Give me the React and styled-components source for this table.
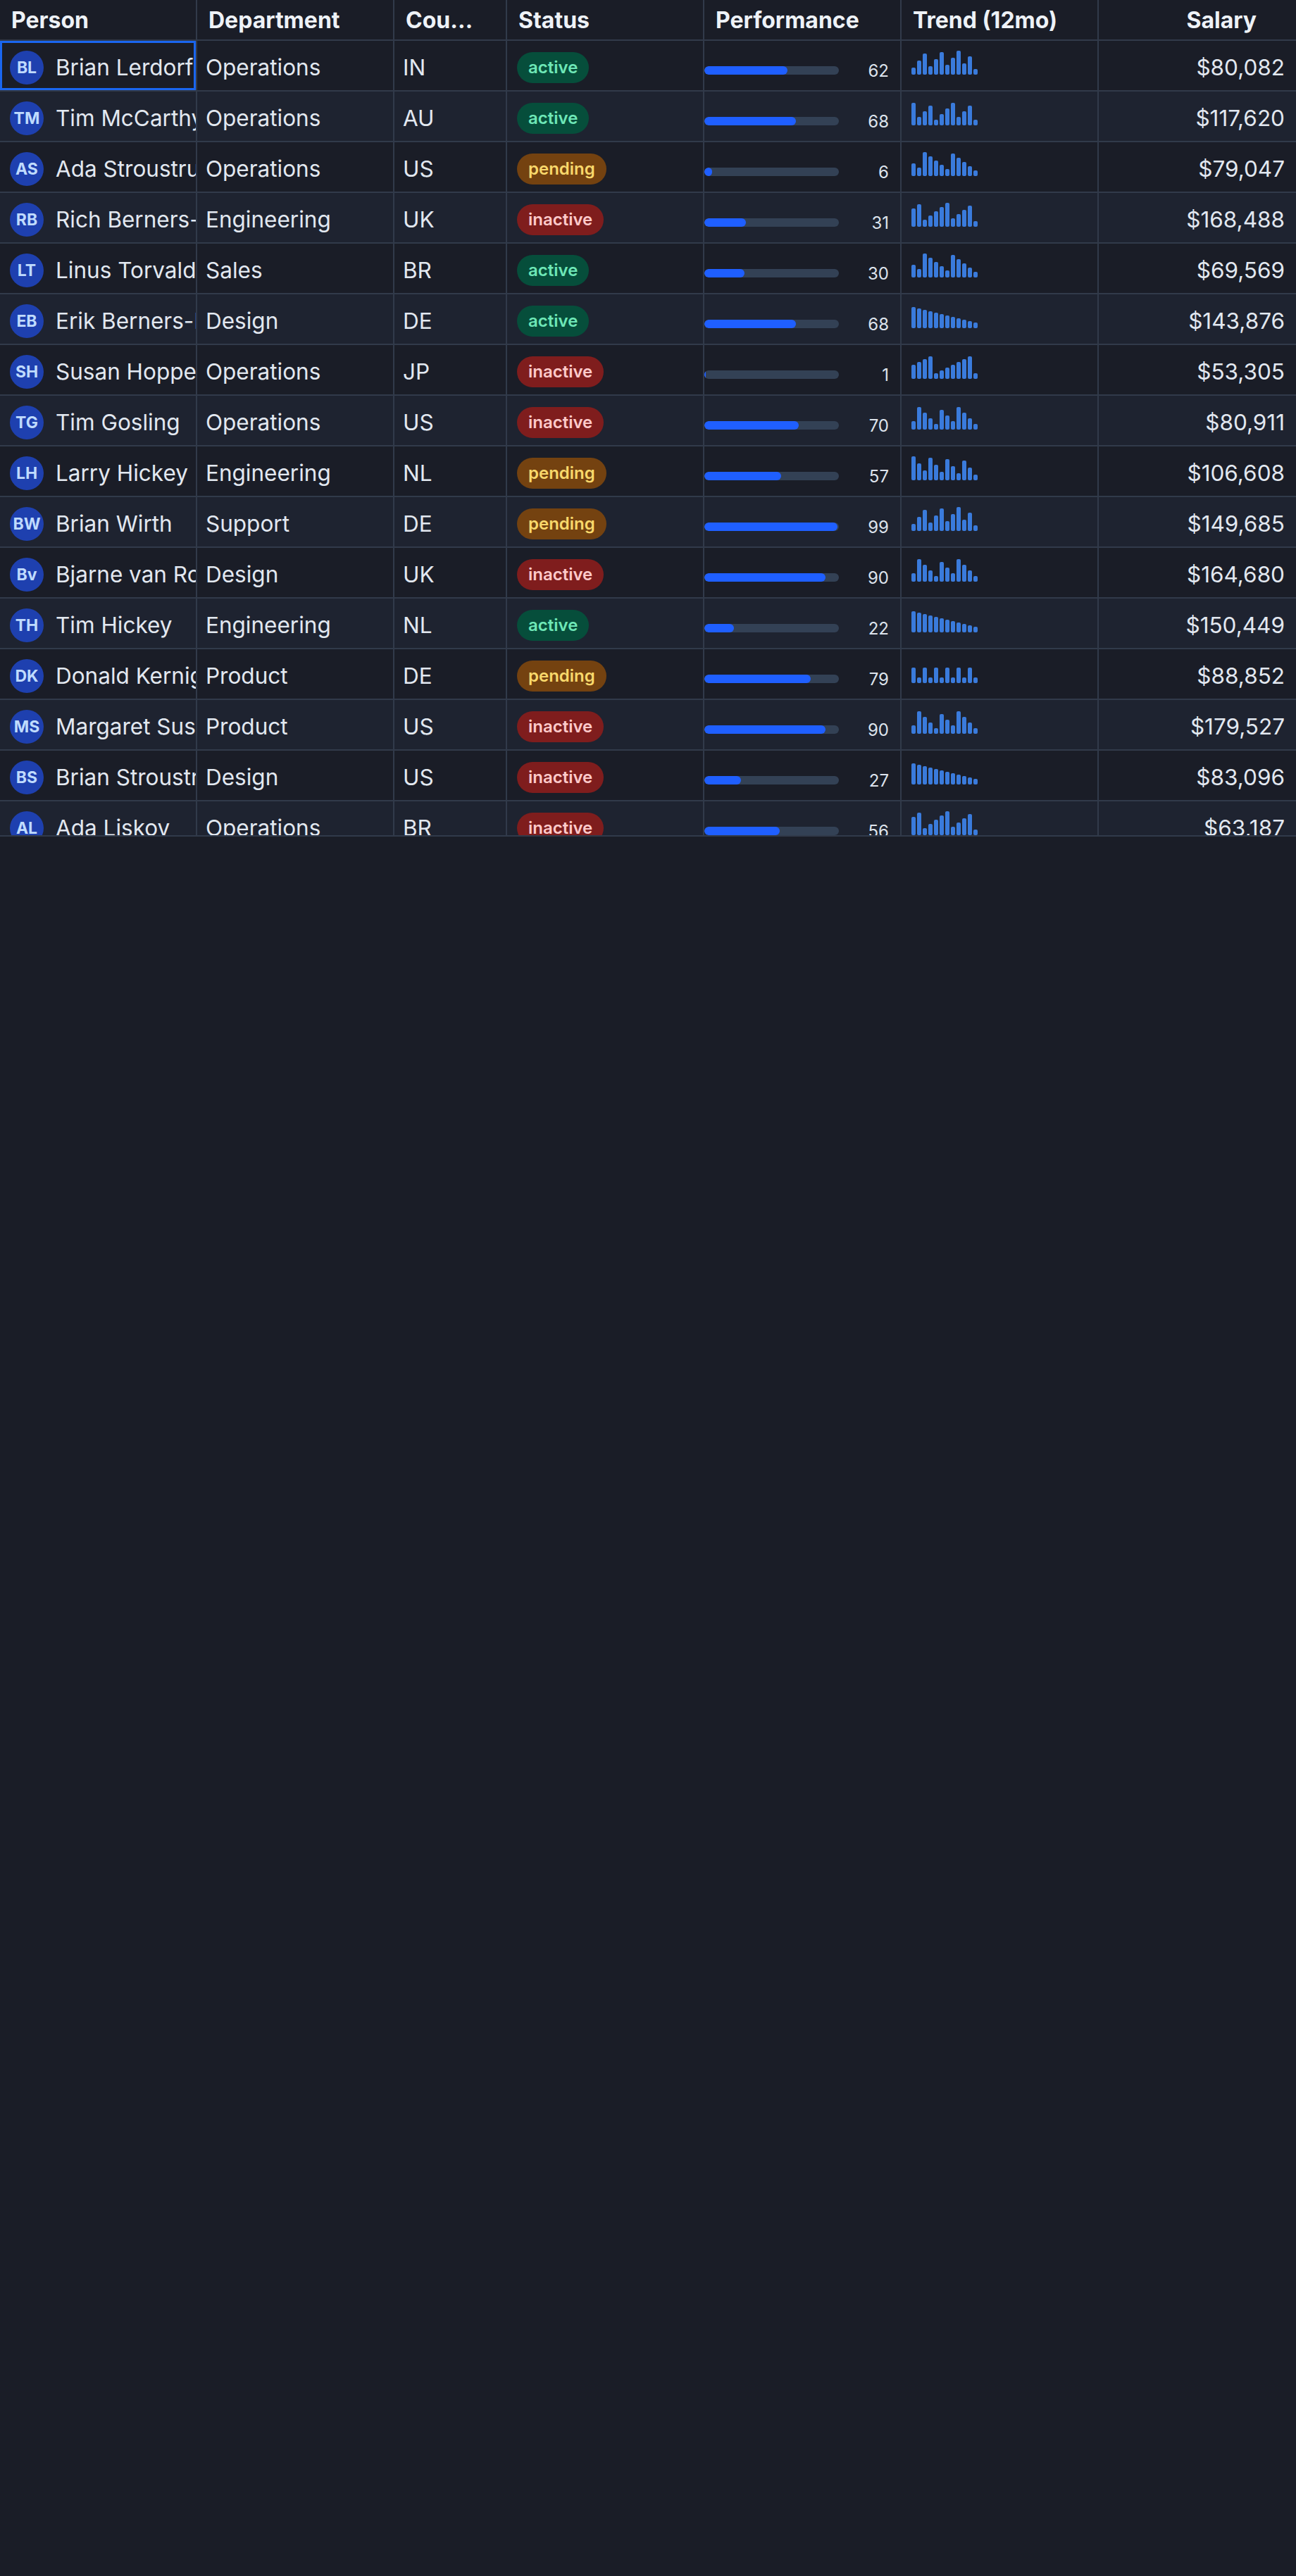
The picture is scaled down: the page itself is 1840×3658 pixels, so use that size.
import styled, { createGlobalStyle } from "styled-components";

const LINE = "#313a4a";
const COLS = "280px 280px 160px 280px 280px 280px 280px";

const GlobalStyle = createGlobalStyle`
  html, body {
    margin: 0;
    background: #1a1d27;
  }
  body {
    font-family: Inter, "Noto Sans", sans-serif;
    color: #e2e8f0;
  }
`;

const Page = styled.div`
  min-height: 3658px;
  background: #1a1d27;
`;

const Grid = styled.div`
  width: 1840px;
  height: 1188px;
  box-sizing: border-box;
  overflow: hidden;
  border-bottom: 2px solid ${LINE};
`;

const HeaderRow = styled.div`
  display: grid;
  grid-template-columns: ${COLS};
  height: 58px;
  box-sizing: border-box;
  border-bottom: 2px solid ${LINE};
  background: #1a1d27;
`;

const HeadCell = styled.div`
  display: flex;
  align-items: center;
  justify-content: ${(p) => (p.$right ? "flex-end" : "flex-start")};
  min-width: 0;
  padding: 0 ${(p) => (p.$right ? "56px" : "46px")} 0 16px;
  border-right: ${(p) => (p.$last ? "none" : `2px solid ${LINE}`)};
  font-size: 32px;
  font-weight: 700;
  color: #eef2f7;
`;

const HeadLabel = styled.span`
  overflow: hidden;
  white-space: nowrap;
  text-overflow: ellipsis;
`;

const Row = styled.div`
  display: grid;
  grid-template-columns: ${COLS};
  height: 72px;
  box-sizing: border-box;
  border-bottom: 2px solid ${LINE};
  background: ${(p) => (p.$alt ? "#1e2330" : "#1a1d27")};
`;

const Cell = styled.div`
  display: flex;
  align-items: center;
  min-width: 0;
  overflow: hidden;
  white-space: nowrap;
  box-sizing: border-box;
  padding: 5px 12px 0;
  border-right: 2px solid ${LINE};
  font-size: 31.5px;
  color: #e2e8f0;
`;

const NameCell = styled(Cell)`
  position: relative;
  gap: 17px;
  padding-left: 14px;
  padding-right: 0;

  &::after {
    content: "";
    display: ${(p) => (p.$focused ? "block" : "none")};
    position: absolute;
    inset: 0;
    border: 3px solid #1a66f0;
    pointer-events: none;
  }
`;

const Avatar = styled.div`
  width: 48px;
  height: 48px;
  flex-shrink: 0;
  border-radius: 50%;
  background: #1e40af;
  color: #bfdbfe;
  font-size: 23px;
  font-weight: 700;
  display: flex;
  align-items: center;
  justify-content: center;
`;

const TextCell = styled(Cell)``;

const StatusCell = styled(Cell)`
  padding-left: 14px;
`;

const BADGE = {
  active: { bg: "#064e3b", fg: "#6ee7b7" },
  pending: { bg: "#744210", fg: "#f9d86b" },
  inactive: { bg: "#7f1d1d", fg: "#fecaca" },
};

const Badge = styled.span`
  display: inline-flex;
  align-items: center;
  height: 44px;
  padding: 0 16px;
  border-radius: 22px;
  font-size: 24px;
  font-weight: 600;
  line-height: 1;
  background: ${(p) => BADGE[p.$status].bg};
  color: ${(p) => BADGE[p.$status].fg};
`;

const PerfCell = styled(Cell)`
  padding: 14px 16px 0 0;
`;

const Track = styled.div`
  width: 191px;
  height: 12px;
  flex-shrink: 0;
  border-radius: 6px;
  background: #334155;
  overflow: hidden;
`;

const Fill = styled.div`
  height: 100%;
  border-radius: 6px;
  background: #1f5fff;
`;

const PerfValue = styled.span`
  flex: 1;
  text-align: right;
  font-size: 24px;
  color: #dde3ec;
`;

const TrendCell = styled(Cell)`
  padding: 0 0 9px 14px;
`;

const Spark = styled.div`
  display: flex;
  align-items: flex-end;
  gap: 2px;
  height: 34px;
`;

const SparkBar = styled.div`
  width: 6px;
  border-radius: 2px;
  background: #3a7bdc;
`;

const SalaryCell = styled(Cell)`
  justify-content: flex-end;
  padding-right: 16px;
  border-right: none;
`;

// sparkline shapes (bar heights in px)
const TRENDS = {
  A: [9, 19, 29, 11, 21, 31, 13, 23, 33, 15, 25, 7],
  B: [31, 11, 19, 27, 7, 15, 23, 31, 11, 19, 27, 7],
  C: [17, 11, 33, 27, 21, 15, 9, 31, 25, 19, 13, 7],
  D: [25, 31, 9, 15, 21, 27, 33, 11, 17, 23, 29, 7],
  E: [29, 27, 25, 23, 21, 19, 17, 15, 13, 11, 9, 7],
  F: [19, 23, 27, 31, 7, 11, 15, 19, 23, 27, 31, 7],
  G: [11, 31, 23, 15, 7, 27, 19, 11, 31, 23, 15, 7],
  H: [33, 23, 13, 31, 21, 11, 29, 19, 9, 27, 17, 7],
  I: [21, 7, 21, 7, 21, 7, 21, 7, 21, 7, 21, 7],
};

const people = [
  ["Brian Lerdorf", "Operations", "IN", "active", 62, "A", "$80,082"],
  ["Tim McCarthy", "Operations", "AU", "active", 68, "B", "$117,620"],
  ["Ada Stroustrup", "Operations", "US", "pending", 6, "C", "$79,047"],
  ["Rich Berners-Lee", "Engineering", "UK", "inactive", 31, "D", "$168,488"],
  ["Linus Torvalds", "Sales", "BR", "active", 30, "C", "$69,569"],
  ["Erik Berners-Lee", "Design", "DE", "active", 68, "E", "$143,876"],
  ["Susan Hopper", "Operations", "JP", "inactive", 1, "F", "$53,305"],
  ["Tim Gosling", "Operations", "US", "inactive", 70, "G", "$80,911"],
  ["Larry Hickey", "Engineering", "NL", "pending", 57, "H", "$106,608"],
  ["Brian Wirth", "Support", "DE", "pending", 99, "A", "$149,685"],
  ["Bjarne van Rossum", "Design", "UK", "inactive", 90, "G", "$164,680"],
  ["Tim Hickey", "Engineering", "NL", "active", 22, "E", "$150,449"],
  ["Donald Kernighan", "Product", "DE", "pending", 79, "I", "$88,852"],
  ["Margaret Sussman", "Product", "US", "inactive", 90, "G", "$179,527"],
  ["Brian Stroustrup", "Design", "US", "inactive", 27, "E", "$83,096"],
  ["Ada Liskov", "Operations", "BR", "inactive", 56, "D", "$63,187"],
];

const initials = (name) =>
  name
    .split(" ")
    .slice(0, 2)
    .map((w) => w[0])
    .join("");

const columns = [
  "Person",
  "Department",
  "Country",
  "Status",
  "Performance",
  "Trend (12mo)",
  "Salary",
];

const App = () => {
  return (
    <Page>
      <GlobalStyle />
      <Grid>
        <HeaderRow>
          {columns.map((c, i) => (
            <HeadCell
              key={c}
              $right={c === "Salary"}
              $last={i === columns.length - 1}
            >
              <HeadLabel>{c}</HeadLabel>
            </HeadCell>
          ))}
        </HeaderRow>
        {people.map(([name, dept, country, status, perf, trend, salary], i) => (
          <Row key={name} $alt={i % 2 === 1}>
            <NameCell $focused={i === 0}>
              <Avatar>{initials(name)}</Avatar>
              <span>{name}</span>
            </NameCell>
            <TextCell>{dept}</TextCell>
            <TextCell>{country}</TextCell>
            <StatusCell>
              <Badge $status={status}>{status}</Badge>
            </StatusCell>
            <PerfCell>
              <Track>
                <Fill style={{ width: `${perf}%` }} />
              </Track>
              <PerfValue>{perf}</PerfValue>
            </PerfCell>
            <TrendCell>
              <Spark>
                {TRENDS[trend].map((h, j) => (
                  <SparkBar key={j} style={{ height: `${h + 0.33}px` }} />
                ))}
              </Spark>
            </TrendCell>
            <SalaryCell>{salary}</SalaryCell>
          </Row>
        ))}
      </Grid>
    </Page>
  );
};

export default App;
